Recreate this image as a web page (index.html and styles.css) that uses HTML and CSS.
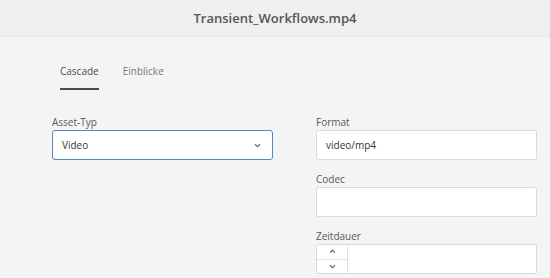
FILE: index.html
```html
<!DOCTYPE html>
<html lang="de">
<head>
	<meta charset="UTF-8">
	<title>Transient_Workflows.mp4</title>
	<link rel="stylesheet" href="styles.css">
</head>
<body>
<div class="header">Transient_Workflows.mp4</div>

<div class="tabs">
	<div class="tab active">Cascade</div>
	<div class="tab">Einblicke</div>
</div>

<div class="form">
	<div class="col">
		<div class="field">
			<label>Asset-Typ</label>
			<div class="select">
				<span>Video</span>
				<svg class="chev" width="7" height="5" viewBox="0 0 7 5"><path d="M1 1.2 L3.5 3.6 L6 1.2" fill="none" stroke="#6e6e6e" stroke-width="1.3"/></svg>
			</div>
		</div>
	</div>
	<div class="col">
		<div class="field">
			<label>Format</label>
			<div class="input">video/mp4</div>
		</div>
		<div class="field">
			<label>Codec</label>
			<div class="input"></div>
		</div>
		<div class="field">
			<label>Zeitdauer</label>
			<div class="input stepper">
				<div class="steps">
					<div class="step"><svg width="7" height="5" viewBox="0 0 7 5"><path d="M1 3.6 L3.5 1.2 L6 3.6" fill="none" stroke="#6e6e6e" stroke-width="1.2"/></svg></div>
					<div class="step"><svg width="7" height="5" viewBox="0 0 7 5"><path d="M1 1.2 L3.5 3.6 L6 1.2" fill="none" stroke="#6e6e6e" stroke-width="1.2"/></svg></div>
				</div>
			</div>
		</div>
	</div>
</div>
</body>
</html>
```

FILE: styles.css
```css
html, body {
	margin: 0;
	background: #f4f4f4;
	font-family: "Open Sans", Lato, sans-serif;
	color: #4b4b4b;
}
.header {
	height: 36px;
	line-height: 36px;
	background: #efefef;
	border-bottom: 1px solid #e9e9e9;
	text-align: center;
	font-size: 13px;
	font-weight: 600;
	color: #555;
}
.tabs {
	display: flex;
	gap: 24px;
	margin: 27px 0 0 60px;
}
.tab {
	font-size: 10px;
	line-height: 14px;
	padding-bottom: 10px;
	border-bottom: 2px solid transparent;
	color: #777;
}
.tab.active {
	color: #4b4b4b;
	border-bottom-color: #4b4b4b;
}
.form {
	display: flex;
	gap: 43px;
	margin: 24px 0 0 52px;
}
.col {
	width: 221px;
}
.field {
	margin-bottom: 11px;
}
.field label {
	display: block;
	font-size: 10px;
	line-height: 16px;
	color: #585858;
}
.select {
	box-sizing: border-box;
	height: 30px;
	border: 1.5px solid #5a85cc;
	border-radius: 3px;
	background: #fff;
	display: flex;
	align-items: center;
	justify-content: space-between;
	padding: 0 11px 0 9px;
	font-size: 10px;
	color: #333;
}
.input {
	box-sizing: border-box;
	height: 30px;
	border: 1px solid #dadada;
	border-radius: 2px;
	background: #fff;
	display: flex;
	align-items: center;
	padding: 0 9px;
	font-size: 10px;
	color: #333;
}
.stepper {
	padding: 0;
}
.steps {
	width: 30px;
	height: 100%;
	border-right: 1px solid #e1e1e1;
	display: flex;
	flex-direction: column;
}
.step {
	flex: 1;
	display: flex;
	align-items: center;
	justify-content: center;
}
.step + .step {
	border-top: 1px solid #e1e1e1;
}
```
